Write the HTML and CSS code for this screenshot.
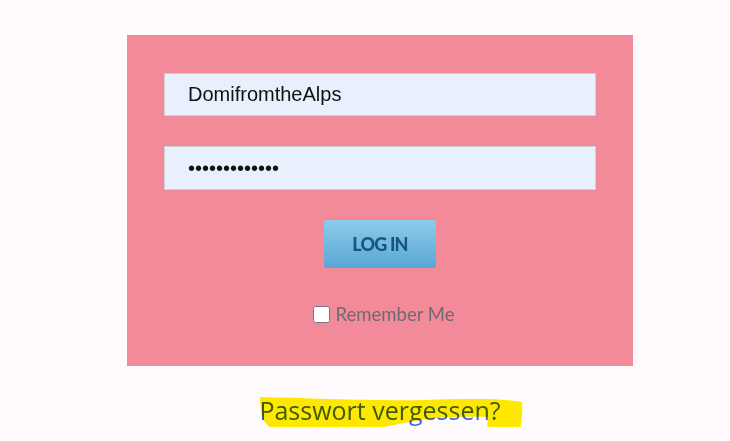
FILE: index.html
```html
<!DOCTYPE html>
<html lang="de">
<head>
    <meta charset="UTF-8">
    <meta name="viewport" content="width=device-width, initial-scale=1.0">
    <title>Login</title>
    <link rel="stylesheet" href="styles.css">
</head>
<body>
    <div class="page">
        <form class="login-box">
            <input type="text" class="field" value="DomifromtheAlps">
            <input type="password" class="field" value="geheimpasswor">
            <button type="button" class="login-btn">LOG IN</button>
            <label class="remember">
                <input type="checkbox"> Remember Me
            </label>
        </form>

        <div class="forgot">
            <a href="#">Passwort vergessen?</a>
            <svg class="marker" width="270" height="50" viewBox="0 0 270 50">
                <path d="M 5 4 C 50 5, 120 8, 170 7 C 210 6, 245 5, 267 9 C 268 22, 266 34, 263 45 L 233 46 C 232 38, 232 30, 233 24 C 205 23, 180 24, 160 28 C 120 36, 80 43, 40 43 C 22 42, 14 34, 9 28 C 6 20, 5 12, 5 4 Z" fill="#ffed00"/>
            </svg>
        </div>
    </div>
</body>
</html>
```

FILE: styles.css
```css
body {
    margin: 0;
    background-color: #fffafb;
    font-family: "Liberation Sans", Arial, sans-serif;
}
.page {
    width: 506px;
    margin: 35px 0 0 127px;
}
.login-box {
    background-color: #f38a9a;
    padding: 38px 37px 41px;
    display: flex;
    flex-direction: column;
    align-items: center;
}
.field {
    box-sizing: border-box;
    width: 432px;
    height: 43px;
    margin: 0 0 30px;
    padding: 0 23px;
    border: 1px solid #cfcfd4;
    background-color: #e8f0fe;
    font-family: "Liberation Sans", Arial, sans-serif;
    font-size: 20px;
    color: #111;
    outline: none;
}
.field:nth-of-type(2) {
    height: 44px;
}
.login-btn {
    width: 112px;
    height: 48px;
    border: none;
    border-radius: 3px;
    background: linear-gradient(#8ecbea, #58a7d5);
    color: #17577e;
    font-family: Lato, sans-serif;
    font-weight: 900;
    font-size: 18px;
    letter-spacing: -0.8px;
    cursor: pointer;
}
.remember {
    display: flex;
    align-items: center;
    gap: 6px;
    margin-top: 35px;
    padding-left: 7px;
    font-family: Lato, sans-serif;
    font-size: 18.5px;
    color: #6c6b72;
}
.remember input {
    width: 17px;
    height: 17px;
    margin: 0;
}
.forgot {
    position: relative;
    text-align: center;
    margin-top: 27px;
}
.forgot a {
    font-family: "Open Sans", sans-serif;
    font-size: 25px;
    color: #3f63ea;
    text-decoration: none;
}
.marker {
    position: absolute;
    left: 128px;
    top: 0;
    mix-blend-mode: multiply;
    pointer-events: none;
}
```
